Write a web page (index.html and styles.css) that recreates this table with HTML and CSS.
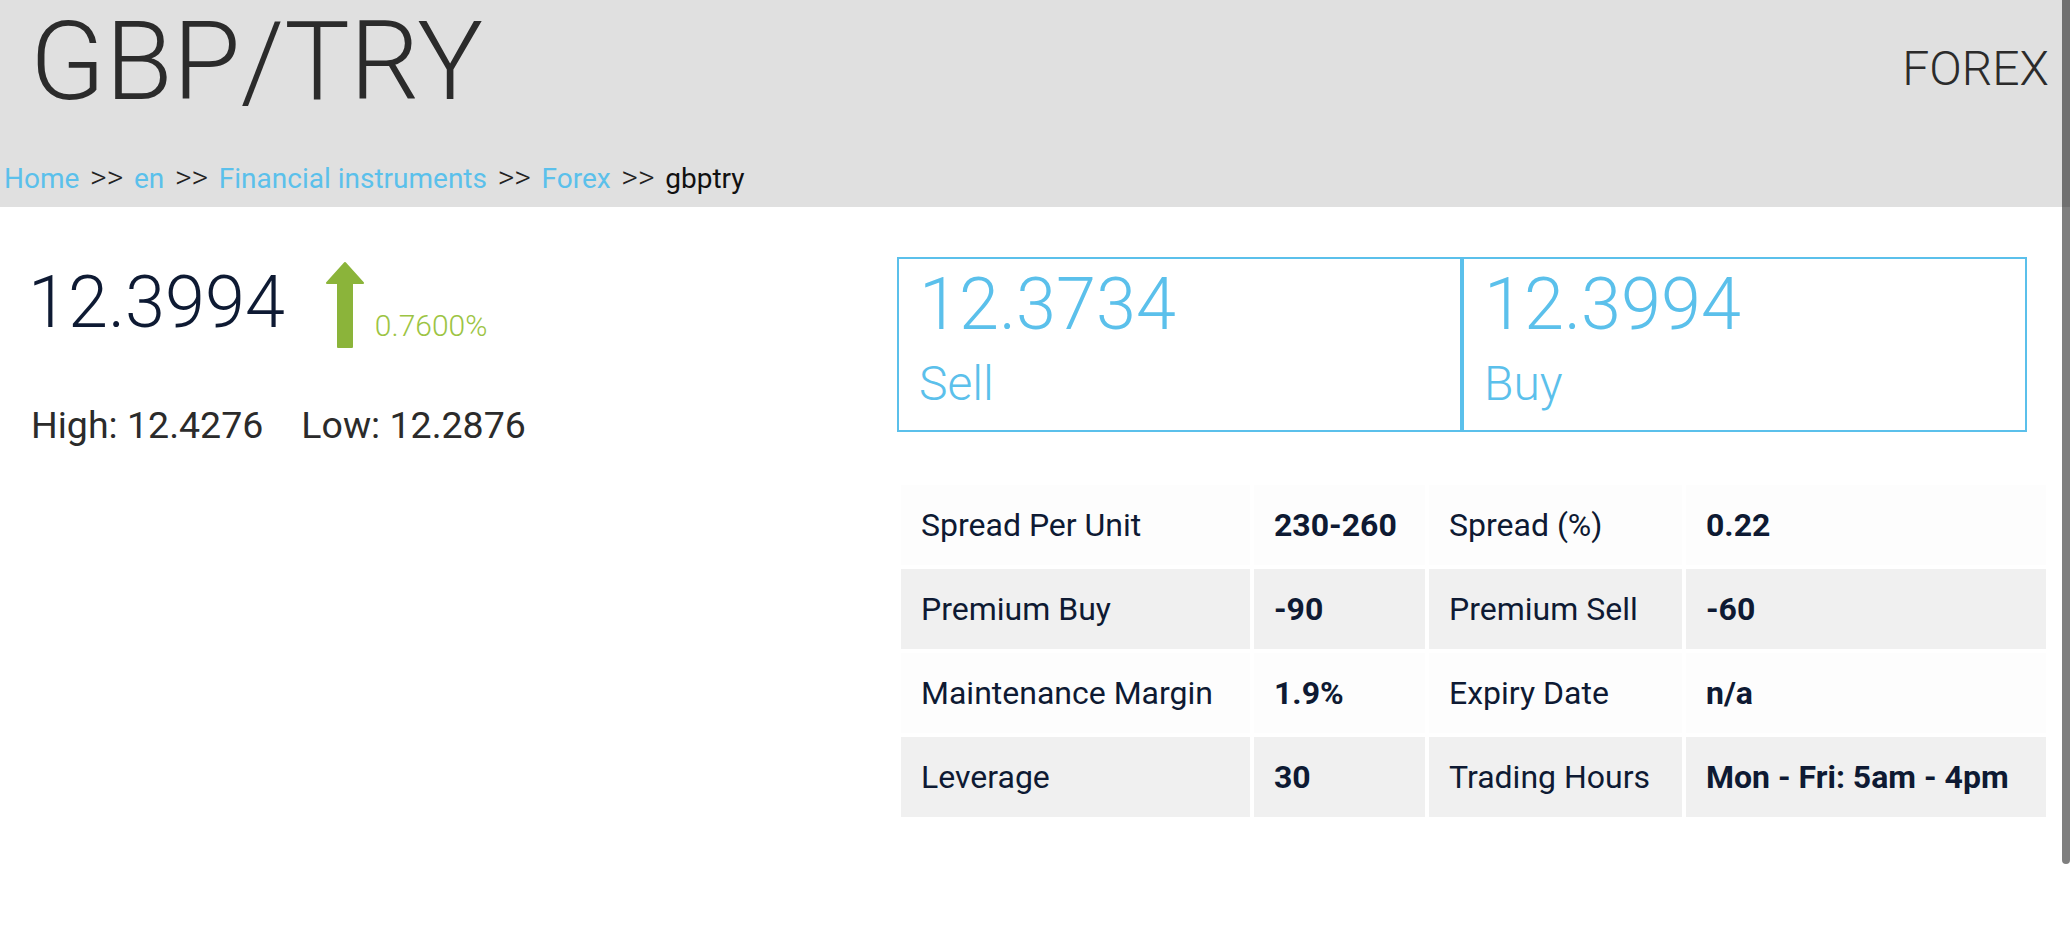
FILE: index.html
```html
<!DOCTYPE html>
<html lang="en">
<head>
<meta charset="utf-8">
<title>GBP/TRY</title>
<link rel="stylesheet" href="styles.css">
</head>
<body>
<header class="hero">
  <div class="hero-top">
    <h1 class="title">GBP/TRY</h1>
    <div class="category">FOREX</div>
  </div>
  <nav class="crumbs">
    <a href="#">Home</a><span class="sep">&gt;&gt;</span><a href="#">en</a><span class="sep">&gt;&gt;</span><a href="#">Financial instruments</a><span class="sep">&gt;&gt;</span><a href="#">Forex</a><span class="sep">&gt;&gt;</span><span class="current">gbptry</span>
  </nav>
</header>
<main class="content">
  <section class="quote">
    <div class="price-row">
      <div class="price">12.3994</div>
      <svg class="arrow" width="40" height="88" viewBox="0 0 40 88">
        <polygon points="20,2 38,22 27,22 27,86 13,86 13,22 2,22" fill="#8bb43a" stroke="#8bb43a" stroke-width="2" stroke-linejoin="round"/>
      </svg>
      <div class="change">0.7600%</div>
    </div>
    <div class="range">
      <span class="range-item"><span class="range-label">High:</span> <span class="range-value">12.4276</span></span>
      <span class="range-item"><span class="range-label">Low:</span> <span class="range-value">12.2876</span></span>
    </div>
  </section>
  <section class="details">
    <div class="sides">
      <div class="side">
        <div class="side-price">12.3734</div>
        <div class="side-label">Sell</div>
      </div>
      <div class="side">
        <div class="side-price">12.3994</div>
        <div class="side-label">Buy</div>
      </div>
    </div>
    <table class="specs">
      <colgroup>
        <col class="c1"><col class="c2"><col class="c3"><col class="c4">
      </colgroup>
      <tbody>
        <tr><td>Spread Per Unit</td><td class="val">230-260</td><td>Spread (%)</td><td class="val">0.22</td></tr>
        <tr><td>Premium Buy</td><td class="val">-90</td><td>Premium Sell</td><td class="val">-60</td></tr>
        <tr><td>Maintenance Margin</td><td class="val">1.9%</td><td>Expiry Date</td><td class="val">n/a</td></tr>
        <tr><td>Leverage</td><td class="val">30</td><td>Trading Hours</td><td class="val">Mon - Fri: 5am - 4pm</td></tr>
      </tbody>
    </table>
  </section>
</main>
<div class="scroll-thumb"></div>
</body>
</html>
```
FILE: styles.css
```css
html, body {
  margin: 0;
  padding: 0;
  overflow: hidden;
  background: #ffffff;
}
body {
  font-family: Roboto, "Liberation Sans", sans-serif;
  color: #0e1a33;
  width: 2070px;
  height: 944px;
}
.hero {
  background: #e0e0e0;
  height: 207px;
  box-sizing: border-box;
}
.hero-top {
  display: flex;
  justify-content: space-between;
  align-items: flex-start;
  padding: 0 21px 0 30px;
}
.title {
  margin: -4px 0 0 0;
  font-size: 110px;
  line-height: 132px;
  font-weight: 300;
  color: #2b2b2b;
}
.category {
  margin-top: 45px;
  font-size: 48px;
  line-height: 48px;
  font-weight: 300;
  color: #2b2b2b;
}
.crumbs {
  margin-top: 35px;
  padding-left: 4px;
  font-size: 28px;
  line-height: 28px;
  height: 28px;
  white-space: nowrap;
}
.crumbs a {
  color: #5bc0eb;
  text-decoration: none;
  font-weight: 400;
}
.crumbs .sep {
  color: #222222;
  font-size: 32px;
  line-height: 28px;
  font-weight: 300;
  margin: 0 10.7px;
}
.crumbs .current {
  color: #111111;
  font-weight: 400;
}
.content {
  display: flex;
  align-items: flex-start;
}
.quote {
  width: 897px;
  box-sizing: border-box;
  padding-left: 28px;
}
.price-row {
  display: flex;
  align-items: flex-start;
  padding-top: 54px;
}
.price {
  margin-top: 6px;
  font-size: 72px;
  line-height: 72px;
  font-weight: 300;
  color: #0e1a33;
}
.arrow {
  display: block;
  margin-left: 40px;
}
.change {
  margin-top: 50px;
  margin-left: 10px;
  font-size: 30px;
  line-height: 30px;
  font-weight: 300;
  color: #9cc443;
}
.range {
  margin-top: 57px;
  padding-left: 3px;
  display: flex;
  font-size: 37.5px;
  line-height: 38px;
  color: #2b2b2b;
}
.range-item {
  margin-right: 38px;
}
.range-label {
  font-weight: 400;
}
.range-value {
  font-weight: 400;
}
.details {
  width: 1153px;
}
.sides {
  display: flex;
  width: 1130px;
  margin-top: 50px;
}
.side {
  flex: 1;
  border: 2px solid #5bc0eb;
  padding: 10px 20px 22px 20px;
  color: #5bc0eb;
}
.side-price {
  font-size: 72px;
  line-height: 72px;
  font-weight: 300;
}
.side-label {
  margin-top: 19px;
  font-size: 48px;
  line-height: 48px;
  font-weight: 300;
}
.specs {
  margin-top: 49px;
  width: 1153px;
  border-collapse: separate;
  border-spacing: 4px;
  table-layout: fixed;
  font-size: 32px;
}
.specs col.c1 { width: 349px; }
.specs col.c2 { width: 171px; }
.specs col.c3 { width: 253px; }
.specs col.c4 { width: 360px; }
.specs td {
  height: 80px;
  padding: 0 0 0 20px;
  box-sizing: border-box;
  vertical-align: middle;
  color: #0e1a33;
  white-space: nowrap;
  font-weight: 400;
}
.specs tr:nth-child(odd) td {
  background: #fdfdfd;
}
.specs tr:nth-child(even) td {
  background: #f0f0f0;
}
.specs td.val {
  font-weight: 700;
}
.scroll-thumb {
  position: fixed;
  top: 0;
  right: 0;
  width: 8px;
  height: 864px;
  background: rgba(0, 0, 0, 0.5);
  border-radius: 0 0 4px 4px;
}
```
